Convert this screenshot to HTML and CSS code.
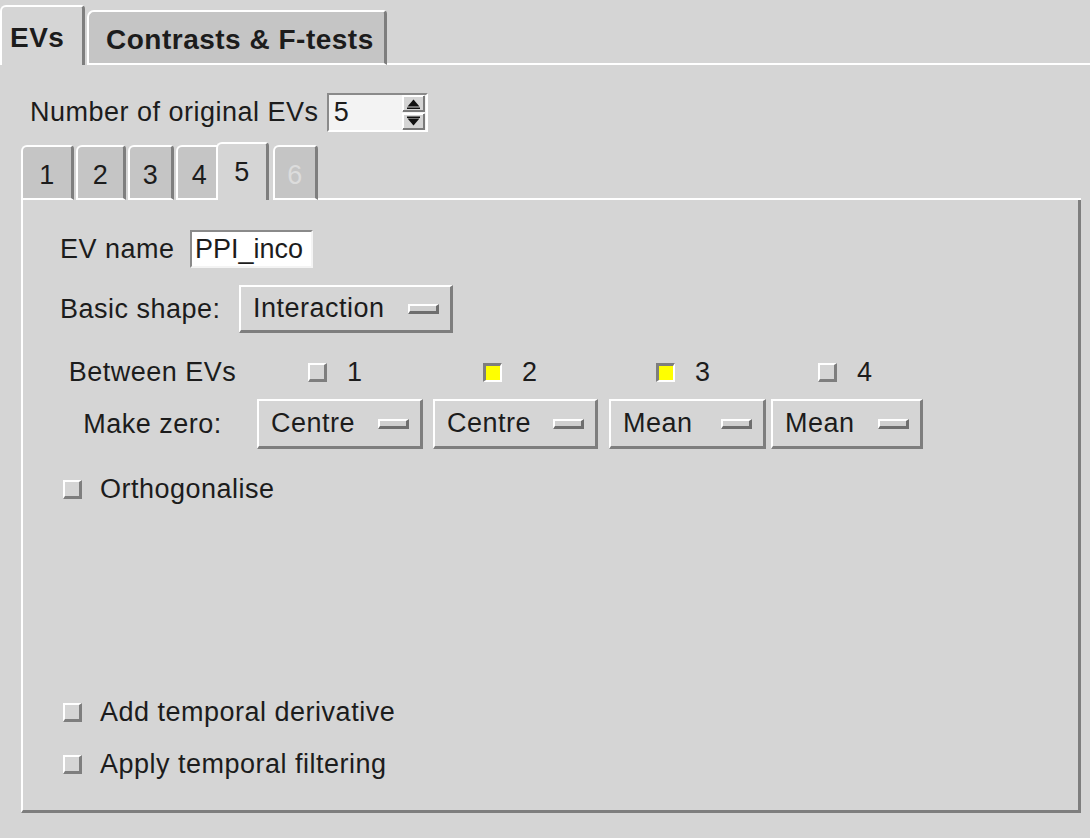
FILE: index.html
```html
<!DOCTYPE html>
<html>
<head>
<meta charset="utf-8">
<link rel="stylesheet" href="styles.css">
</head>
<body>
<div class="app">
  <div class="tabbar">
    <div class="tab tab-active">EVs</div>
    <div class="tab tab-inactive">Contrasts &amp; F-tests</div>
    <div class="tab-fill"></div>
  </div>
  <div class="page">
    <div class="num-row">
      <span class="label">Number of original EVs</span>
      <div class="spin">
        <span class="spin-val">5</span>
        <svg class="spin-btns" width="23" height="35" viewBox="0 0 23 35">
          <rect x="0" y="0" width="23" height="17" fill="#d4d4d4"/>
          <path d="M1 16V1H22" stroke="#fff" stroke-width="2" fill="none"/>
          <path d="M1 16H22V1" stroke="#7a7a7a" stroke-width="2" fill="none"/>
          <path d="M5.5 11.5L11.5 4.5L17.5 11.5Z" fill="#111"/>
          <rect x="5" y="12.5" width="13" height="1.5" fill="#111"/>
          <rect x="0" y="18" width="23" height="17" fill="#d4d4d4"/>
          <path d="M1 34V19H22" stroke="#fff" stroke-width="2" fill="none"/>
          <path d="M1 34H22V19" stroke="#7a7a7a" stroke-width="2" fill="none"/>
          <rect x="5" y="21.5" width="13" height="1.5" fill="#111"/>
          <path d="M5.5 23.5L17.5 23.5L11.5 30.5Z" fill="#111"/>
        </svg>
      </div>
    </div>
    <div class="subtabs">
      <div class="stab st1">1</div>
      <div class="stab st2">2</div>
      <div class="stab st3">3</div>
      <div class="stab st4">4</div>
      <div class="stab stab-active">5</div>
      <div class="stab stab-dis">6</div>
      <div class="stab-fill"></div>
    </div>
    <div class="panel">
      <div class="ev-row">
        <span class="label ev-label">EV name</span>
        <div class="entry">PPI_inco</div>
      </div>
      <div class="shape-row">
        <span class="label shape-label">Basic shape:</span>
        <div class="menubtn mb-shape"><span>Interaction</span><span class="ind"></span></div>
      </div>
      <div class="evgrid">
        <div class="glabel">Between EVs</div>
        <div class="cbcell p51"><span class="cb"></span><span class="cbnum">1</span></div>
        <div class="cbcell p50"><span class="cb cb-on"></span><span class="cbnum">2</span></div>
        <div class="cbcell p47"><span class="cb cb-on"></span><span class="cbnum">3</span></div>
        <div class="cbcell p47"><span class="cb"></span><span class="cbnum">4</span></div>
        <div class="glabel">Make zero:</div>
        <div class="menubtn mb1"><span>Centre</span><span class="ind"></span></div>
        <div class="menubtn mb2"><span>Centre</span><span class="ind"></span></div>
        <div class="menubtn mb3"><span>Mean</span><span class="ind"></span></div>
        <div class="menubtn mb4"><span>Mean</span><span class="ind"></span></div>
      </div>
      <div class="check-row orth"><span class="cb"></span><span class="label">Orthogonalise</span></div>
      <div class="check-row deriv"><span class="cb"></span><span class="label">Add temporal derivative</span></div>
      <div class="check-row filt"><span class="cb"></span><span class="label">Apply temporal filtering</span></div>
    </div>
  </div>
</div>
</body>
</html>
```
FILE: styles.css
```css
html, body {
  margin: 0;
  padding: 0;
  background: #d5d5d5;
}
body {
  width: 1090px;
  height: 838px;
  overflow: hidden;
  font-family: "Liberation Sans", Arial, sans-serif;
  color: #1c1c1c;
  font-size: 27px;
  letter-spacing: 0.5px;
}
.app {
  display: flex;
  flex-direction: column;
}
.tabbar {
  display: flex;
  align-items: flex-end;
  height: 65px;
}
.tab {
  box-sizing: border-box;
  font-weight: bold;
  font-size: 28px;
  display: flex;
  align-items: center;
}
.tab-active {
  width: 85px;
  height: 60px;
  border-top: 2px solid #fff;
  border-left: 2px solid #fff;
  border-right: 3px solid #7e7e7e;
  border-top-left-radius: 6px;
  border-top-right-radius: 4px;
  padding: 4px 0 0 8px;
}
.tab-inactive {
  margin-left: 2px;
  width: 300px;
  height: 55px;
  background: #c5c5c5;
  border-top: 2px solid #fff;
  border-left: 2px solid #fff;
  border-right: 3px solid #7e7e7e;
  border-bottom: 2px solid #fff;
  border-top-left-radius: 7px;
  border-top-right-radius: 4px;
  padding: 4px 0 0 17px;
}
.tab-fill {
  flex: 1;
  border-bottom: 2px solid #fff;
}
.page {
  padding-left: 21px;
  display: flex;
  flex-direction: column;
}
.num-row {
  margin-top: 28px;
  margin-left: 9px;
  display: flex;
  align-items: center;
  height: 39px;
}
.num-row .label {
  margin-right: 8px;
}
.spin {
  box-sizing: border-box;
  width: 101px;
  height: 39px;
  background: #f3f3f3;
  border-style: solid;
  border-width: 2px;
  border-color: #8a8a8a #fff #fff #8a8a8a;
  display: flex;
  align-items: center;
  justify-content: space-between;
  padding: 0 1px 0 5px;
}
.spin-val {
  line-height: 1;
}
.spin-btns {
  display: block;
}
.subtabs {
  margin-top: 10px;
  width: 1060px;
  height: 58px;
  display: flex;
  align-items: flex-end;
}
.stab {
  box-sizing: border-box;
  height: 55px;
  background: #c5c5c5;
  border-top: 2px solid #fff;
  border-left: 2px solid #fff;
  border-right: 3px solid #7e7e7e;
  border-bottom: 2px solid #fff;
  border-top-left-radius: 6px;
  border-top-right-radius: 4px;
  display: flex;
  align-items: center;
  justify-content: center;
  padding-top: 6px;
}
.st1 { width: 53px; }
.st2 { width: 50px; margin-left: 2px; }
.st3 { width: 46px; margin-left: 2px; }
.st4 { width: 44px; margin-left: 2px; padding-left: 4px; }
.stab-active {
  width: 53px;
  height: 58px;
  margin-left: -4px;
  background: #d5d5d5;
  border-bottom: none;
  padding-top: 0;
}
.stab-dis {
  width: 45px;
  margin-left: 4px;
  color: #dcdcdc;
}
.stab-fill {
  flex: 1;
  border-bottom: 2px solid #fff;
}
.panel {
  box-sizing: border-box;
  width: 1060px;
  height: 613px;
  border-left: 2px solid #fff;
  border-right: 3px solid #7e7e7e;
  border-bottom: 3px solid #7e7e7e;
  padding: 30px 0 0 37px;
  display: flex;
  flex-direction: column;
}
.ev-row {
  display: flex;
  align-items: center;
  height: 38px;
}
.ev-label {
  width: 130px;
}
.entry {
  box-sizing: border-box;
  width: 123px;
  height: 38px;
  background: #fff;
  border-style: solid;
  border-width: 2px;
  border-color: #8a8a8a #f4f4f4 #f4f4f4 #8a8a8a;
  padding-left: 3px;
  display: flex;
  align-items: center;
  overflow: hidden;
  white-space: nowrap;
  letter-spacing: 0;
}
.shape-row {
  margin-top: 17px;
  display: flex;
  align-items: center;
  height: 48px;
}
.shape-label {
  width: 179px;
}
.menubtn {
  box-sizing: border-box;
  border-style: solid;
  border-width: 2px 3px 3px 2px;
  border-color: #fff #7e7e7e #7e7e7e #fff;
  display: flex;
  align-items: center;
  justify-content: space-between;
  padding: 0 11px 0 12px;
}
.mb-shape {
  width: 214px;
  height: 48px;
}
.ind {
  box-sizing: border-box;
  width: 31px;
  height: 10px;
  border-style: solid;
  border-width: 2px 3px 3px 2px;
  border-color: #fff #6e6e6e #6e6e6e #fff;
  background: #cfcfcf;
}
.evgrid {
  margin-top: 26px;
  margin-left: -12px;
  display: grid;
  grid-template-columns: 209px 176px 176px 162px 152px;
  grid-template-rows: 26px 50px;
  row-gap: 14px;
}
.glabel {
  text-align: center;
  display: flex;
  align-items: center;
  justify-content: center;
}
.cbcell {
  display: flex;
  align-items: center;
}
.p51 { padding-left: 51px; }
.p50 { padding-left: 50px; }
.p47 { padding-left: 47px; }
.cbnum {
  margin-left: 20px;
}
.cb {
  box-sizing: border-box;
  width: 19px;
  height: 19px;
  flex: none;
  background: #d5d5d5;
  border-style: solid;
  border-width: 2px 3px 3px 2px;
  border-color: #fff #7e7e7e #7e7e7e #fff;
}
.cb-on {
  background: #ffff00;
  border-width: 3px 2px 2px 3px;
  border-color: #7e7e7e #fff #fff #7e7e7e;
}
.mb1 { width: 166px; height: 50px; }
.mb2 { width: 165px; height: 50px; }
.mb3 { width: 157px; height: 50px; }
.mb4 { width: 152px; height: 50px; }
.check-row {
  display: flex;
  align-items: center;
  height: 26px;
  padding-left: 3px;
}
.check-row .cb {
  margin-right: 18px;
}
.orth { margin-top: 27px; }
.deriv { margin-top: 197px; }
.filt { margin-top: 26px; }
```
